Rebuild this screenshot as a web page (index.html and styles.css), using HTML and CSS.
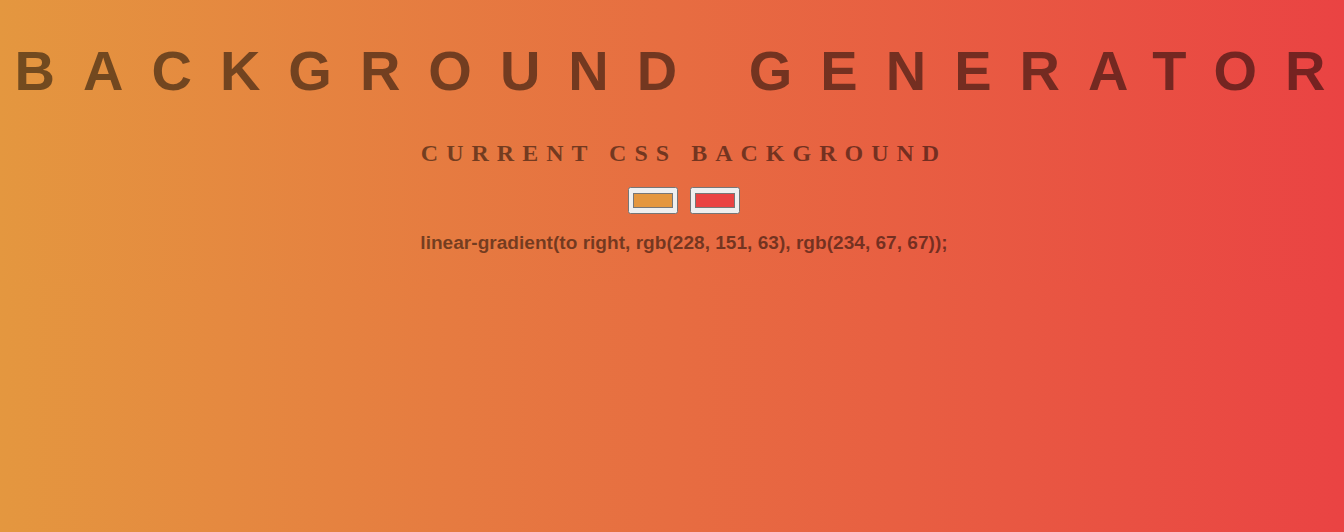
FILE: index.html
```html
<!DOCTYPE html>
<html lang="en">
<head>
<meta charset="utf-8">
<title>Background Generator</title>
<link rel="stylesheet" href="styles.css">
</head>
<body class="page">
<h1 class="title">Background Generator</h1>
<h2 class="subtitle">Current CSS Background</h2>
<input class="color" type="color" name="color1" value="#e4973f">
<input class="color" type="color" name="color2" value="#ea4343">
<h3 class="css-output">linear-gradient(to right, rgb(228, 151, 63), rgb(234, 67, 67));</h3>
</body>
</html>
```
FILE: styles.css
```css
html {
  overflow-x: hidden;
}

.page {
  margin: 8px -16px 8px 8px;
  font-family: "Liberation Sans", Arial, sans-serif;
  color: rgba(0, 0, 0, 0.5);
  text-align: center;
  text-transform: uppercase;
  letter-spacing: 0.5em;
  background: linear-gradient(to right, rgb(228, 151, 63), rgb(234, 67, 67));
}

.title {
  font: bold 56px "Liberation Sans", Arial, sans-serif;
  letter-spacing: 0.5em;
  white-space: nowrap;
  margin: 29.5px 0 37.5px;
}

.subtitle {
  font: bold 24px "Liberation Serif", "Times New Roman", serif;
  margin: 0.83em 0;
}

.color {
  vertical-align: baseline;
}

.css-output {
  font: bold 19.1px "Liberation Sans", Arial, sans-serif;
  text-transform: none;
  letter-spacing: normal;
  margin: 18.5px 0;
}
```
